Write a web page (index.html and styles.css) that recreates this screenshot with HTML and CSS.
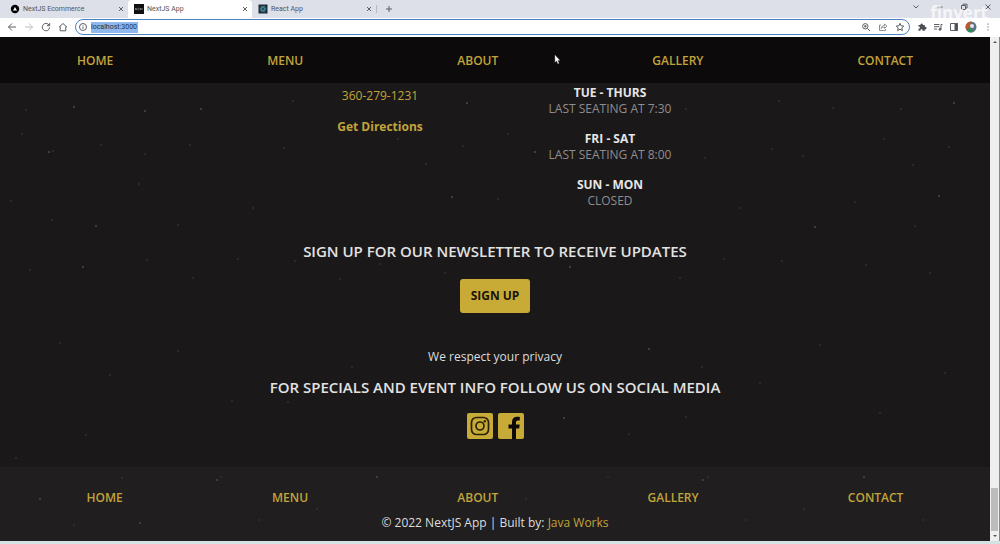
FILE: index.html
```
<!DOCTYPE html>
<html lang="en">
<head>
    <meta charset="UTF-8">
    <meta name="viewport" content="width=device-width, initial-scale=1.0">
    <title>NextJS App</title>
    <link rel="stylesheet" href="styles.css">
</head>
<body>
    <header class="browser">
        <div class="tabs">
            <div class="tab">
                <svg class="favicon" viewBox="0 0 10 10"><circle cx="5" cy="5" r="4.2" fill="#000"/><path d="M5 3l2 3.4H3z" fill="#fff"/></svg>
                <span class="tab-title">NextJS Ecommerce</span>
                <button class="tab-close" aria-label="Close tab"><svg viewBox="0 0 6 6"><path d="M1 1l4 4M5 1L1 5"/></svg></button>
            </div>
            <div class="tab active">
                <svg class="favicon" viewBox="0 0 10 10"><rect width="10" height="10" fill="#111"/><path d="M1.5 6V4l1.5 2V4M4 4.2h1.2M4 5.8h1.2M6 4l1 2M7 4L6 6M8 4v2" stroke="#bbb" stroke-width=".5" fill="none"/></svg>
                <span class="tab-title">NextJS App</span>
                <button class="tab-close" aria-label="Close tab"><svg viewBox="0 0 6 6"><path d="M1 1l4 4M5 1L1 5"/></svg></button>
            </div>
            <div class="tab">
                <svg class="favicon" viewBox="0 0 10 10"><rect x=".5" y=".5" width="9" height="9" fill="#1d2b36"/><g fill="none" stroke="#4f9bab" stroke-width=".6"><ellipse cx="5" cy="5" rx="3.2" ry="1.3"/><ellipse cx="5" cy="5" rx="3.2" ry="1.3" transform="rotate(60 5 5)"/><ellipse cx="5" cy="5" rx="3.2" ry="1.3" transform="rotate(120 5 5)"/></g></svg>
                <span class="tab-title">React App</span>
                <button class="tab-close" aria-label="Close tab"><svg viewBox="0 0 6 6"><path d="M1 1l4 4M5 1L1 5"/></svg></button>
            </div>
            <button class="new-tab" aria-label="New tab"><svg viewBox="0 0 8 8"><path d="M4 1v6M1 4h6"/></svg></button>
            <div class="window-controls">
                <button aria-label="Search tabs"><svg viewBox="0 0 8 8"><path d="M1.5 2.5L4 5l2.500-2.500"/></svg></button>
                <button aria-label="Minimize"><svg viewBox="0 0 8 8"><path d="M1.500 4h5"/></svg></button>
                <button aria-label="Restore"><svg viewBox="0 0 8 8"><path d="M1.500 2.500h4v4h-4zM3 2.500V1.200h4V5H5.500"/></svg></button>
                <button aria-label="Close"><svg viewBox="0 0 8 8"><path d="M1.500 1.500l5 5M6.500 1.500l-5 5"/></svg></button>
            </div>
            <span class="watermark">finvert</span>
        </div>
        <div class="toolbar">
            <button aria-label="Back"><svg viewBox="0 0 10 10"><path d="M9 5H1.500M5 1.500L1.500 5 5 8.500"/></svg></button>
            <button class="disabled" aria-label="Forward"><svg viewBox="0 0 10 10"><path d="M1 5h7.500M5 1.500L8.500 5 5 8.500"/></svg></button>
            <button aria-label="Reload"><svg viewBox="0 0 10 10"><path d="M8.200 3.200A3.700 3.700 0 1 0 8.700 5.500M8.700 1v2.700H6"/></svg></button>
            <button aria-label="Home"><svg viewBox="0 0 10 10"><path d="M1 5.200L5 1.500l4 3.700M2.200 4.500v4.300h5.600V4.500"/></svg></button>
            <div class="address">
                <svg class="icon" viewBox="0 0 10 10"><circle cx="5" cy="5" r="3.500"/><path d="M5 4.500v2.300M5 3v.7"/></svg>
                <label class="url"><input type="text" value="localhost:3000" aria-label="Address"></label>
                <button aria-label="Zoom"><svg viewBox="0 0 10 10"><circle cx="4.300" cy="4.300" r="2.700"/><path d="M6.300 6.300L9 9M3 4.300h2.600M4.300 3v2.600"/></svg></button>
                <button class="share" aria-label="Share"><svg viewBox="0 0 10 10"><path d="M3 3H1.500v5.500h6V7M3.200 6.500C3.500 4.300 5 3.500 6.500 3.500V2L9 4.200 6.500 6.400V5C5 5 4 5.500 3.200 6.500z"/></svg></button>
                <button aria-label="Bookmark"><svg viewBox="0 0 10 10"><path d="M5 1.300l1.100 2.500 2.700.3-2 1.800.6 2.700L5 7.200 2.600 8.600l.6-2.700-2-1.800 2.700-.3z"/></svg></button>
            </div>
            <div class="extensions">
                <button aria-label="Extensions"><svg viewBox="0 0 10 10"><path d="M1.500 3h2a1.200 1.200 0 1 1 2.300 0h2v2a1.200 1.200 0 1 1 0 2.200v1.600H5.600a1.100 1.100 0 1 0-2.100 0h-2V6.500a1 1 0 1 0 0-1.800z" fill="#4a4d52" stroke="none"/></svg></button>
                <button aria-label="Media"><svg viewBox="0 0 10 10"><path d="M1 2.500h5.500M1 4.700h5.500M1 7h3M9.500 2.500H8v4.700"/><circle cx="7" cy="7.300" r="1" fill="#4a4d52"/></svg></button>
                <button aria-label="Side panel"><svg viewBox="0 0 10 10"><path d="M1.500 1.500h7v7h-7z"/><path d="M6 1.500h2.500v7H6z" fill="#4a4d52"/></svg></button>
                <button class="avatar" aria-label="Profile"><svg viewBox="0 0 12 12"><circle cx="6" cy="6" r="5.500" fill="#5c7583" stroke="none"/><path d="M6 .5A5.500 5.500 0 0 0 1.500 9L5 6z" fill="#c2562f" stroke="none"/><path d="M1.500 9A5.500 5.500 0 0 0 8 11L6 6z" fill="#2f8a5b" stroke="none"/><circle cx="7" cy="5" r="2" fill="#dfe6ee" stroke="none"/></svg></button>
                <button aria-label="More"><svg viewBox="0 0 10 10"><path d="M5 1.500v1.200M5 4.400v1.200M5 7.300v1.200"/></svg></button>
            </div>
        </div>
    </header>

    <div class="viewport">
        <div class="page">
            <!-- speckled background -->
            <svg class="stars" aria-hidden="true">
                <g fill="#4c4a4b">
                    <circle cx="74" cy="24" r="1"/><circle cx="145" cy="28" r="1"/><circle cx="201" cy="26" r="1"/><circle cx="49" cy="69" r="1"/><circle cx="83" cy="184" r="1"/><circle cx="96" cy="143" r="1"/><circle cx="467" cy="20" r="1"/><circle cx="535" cy="69" r="1"/><circle cx="452" cy="114" r="1"/><circle cx="954" cy="20" r="1"/><circle cx="939" cy="113" r="1"/><circle cx="815" cy="144" r="1"/><circle cx="570" cy="184" r="1"/><circle cx="649" cy="266" r="1"/><circle cx="564" cy="335" r="1"/><circle cx="217" cy="397" r="1"/><circle cx="377" cy="394" r="1"/><circle cx="703" cy="397" r="1"/><circle cx="864" cy="394" r="1"/><circle cx="40" cy="416" r="1"/><circle cx="140" cy="440" r="1"/>
                </g>
                <g fill="#323031">
                    <circle cx="26" cy="27" r="1"/><circle cx="22" cy="51" r="1"/><circle cx="53" cy="68" r="1"/><circle cx="101" cy="62" r="1"/><circle cx="145" cy="71" r="1"/><circle cx="190" cy="62" r="1"/><circle cx="284" cy="65" r="1"/><circle cx="293" cy="18" r="1"/><circle cx="139" cy="101" r="1"/><circle cx="11" cy="118" r="1"/><circle cx="52" cy="137" r="1"/><circle cx="178" cy="142" r="1"/><circle cx="253" cy="125" r="1"/><circle cx="147" cy="177" r="1"/><circle cx="238" cy="176" r="1"/><circle cx="295" cy="178" r="1"/><circle cx="30" cy="187" r="1"/><circle cx="193" cy="195" r="1"/><circle cx="463" cy="63" r="1"/><circle cx="508" cy="51" r="1"/><circle cx="426" cy="81" r="1"/><circle cx="498" cy="116" r="1"/><circle cx="398" cy="56" r="1"/><circle cx="686" cy="26" r="1"/><circle cx="779" cy="18" r="1"/><circle cx="833" cy="25" r="1"/><circle cx="901" cy="26" r="1"/><circle cx="884" cy="56" r="1"/><circle cx="949" cy="64" r="1"/><circle cx="913" cy="82" r="1"/><circle cx="705" cy="75" r="1"/><circle cx="772" cy="66" r="1"/><circle cx="803" cy="73" r="1"/><circle cx="740" cy="125" r="1"/><circle cx="855" cy="119" r="1"/><circle cx="915" cy="143" r="1"/><circle cx="724" cy="176" r="1"/><circle cx="782" cy="178" r="1"/><circle cx="866" cy="182" r="1"/><circle cx="930" cy="190" r="1"/><circle cx="380" cy="181" r="1"/><circle cx="445" cy="190" r="1"/><circle cx="340" cy="196" r="1"/><circle cx="680" cy="195" r="1"/><circle cx="60" cy="260" r="1"/><circle cx="110" cy="292" r="1"/><circle cx="178" cy="268" r="1"/><circle cx="232" cy="318" r="1"/><circle cx="86" cy="352" r="1"/><circle cx="16" cy="375" r="1"/><circle cx="352" cy="284" r="1"/><circle cx="288" cy="319" r="1"/><circle cx="629" cy="351" r="1"/><circle cx="686" cy="334" r="1"/><circle cx="702" cy="284" r="1"/><circle cx="760" cy="300" r="1"/><circle cx="820" cy="262" r="1"/><circle cx="880" cy="330" r="1"/><circle cx="945" cy="290" r="1"/><circle cx="122" cy="395" r="1"/><circle cx="221" cy="394" r="1"/><circle cx="526" cy="416" r="1"/><circle cx="608" cy="394" r="1"/><circle cx="708" cy="394" r="1"/><circle cx="317" cy="426" r="1"/><circle cx="74" cy="442" r="1"/><circle cx="259" cy="437" r="1"/><circle cx="746" cy="437" r="1"/><circle cx="804" cy="426" r="1"/><circle cx="923" cy="437" r="1"/>
                </g>
            </svg>

            <nav class="nav top-nav">
                <a href="#">HOME</a>
                <a href="#">MENU</a>
                <a href="#">ABOUT</a>
                <a href="#">GALLERY</a>
                <a href="#">CONTACT</a>
            </nav>

            <main>
                <section class="info">
                    <div class="contact">
                        <a href="tel:3602791231">360-279-1231</a>
                        <a href="#" class="directions">Get Directions</a>
                    </div>
                    <div class="hours">
                        <p><strong>TUE - THURS</strong><br>LAST SEATING AT 7:30</p>
                        <p><strong>FRI - SAT</strong><br>LAST SEATING AT 8:00</p>
                        <p><strong>SUN - MON</strong><br>CLOSED</p>
                    </div>
                </section>

                <section class="newsletter">
                    <h2>SIGN UP FOR OUR NEWSLETTER TO RECEIVE UPDATES</h2>
                    <button class="signup">SIGN UP</button>
                    <p>We respect your privacy</p>
                </section>

                <section class="social">
                    <h2>FOR SPECIALS AND EVENT INFO FOLLOW US ON SOCIAL MEDIA</h2>
                    <div class="social-links">
                        <a href="#" aria-label="Instagram">
                            <svg viewBox="0 0 26 26"><rect width="26" height="26" rx="2" fill="#c8ab37"/><g fill="none" stroke="#2a2108" stroke-width="1.700"><rect x="4.500" y="4.500" width="17" height="17" rx="5"/><circle cx="13" cy="13" r="4"/></g><circle cx="17.800" cy="8.200" r="1.200" fill="#2a2108"/></svg>
                        </a>
                        <a href="#" aria-label="Facebook">
                            <svg viewBox="0 0 26 26"><rect width="26" height="26" rx="2" fill="#c8ab37"/><path d="M14 26V15.500h-3.500v-4H14V9c0-3.500 2-5.200 5.200-5.200 1.200 0 2 .1 2.600.2v3.500h-1.900c-1.500 0-1.900.8-1.900 1.900v2.100h3.700l-.5 4H18V26z" fill="#0d0b08"/></svg>
                        </a>
                    </div>
                </section>
            </main>

            <footer>
                <nav class="nav">
                    <a href="#">HOME</a>
                    <a href="#">MENU</a>
                    <a href="#">ABOUT</a>
                    <a href="#">GALLERY</a>
                    <a href="#">CONTACT</a>
                </nav>
                <p>© 2022 NextJS App | Built by: <a href="#">Java Works</a></p>
            </footer>

            <svg class="cursor" viewBox="0 0 8 12" aria-hidden="true"><path d="M1 .5v9l2-1.800 1.400 3.300 1.500-.7-1.400-3.100H7z" fill="#fff" stroke="#333" stroke-width=".4"/></svg>
        </div>
        <div class="scrollbar">
            <svg viewBox="0 0 8 8"><path d="M2 5l2-2 2 2z"/></svg>
            <div class="thumb"></div>
            <svg viewBox="0 0 8 8"><path d="M2 3l2 2 2-2z"/></svg>
        </div>
    </div>
    <div class="taskbar"></div>
</body>
</html>
```
FILE: styles.css
```
* {
    box-sizing: border-box;
}
body {
    margin: 0;
    height: 100vh;
    display: flex;
    flex-direction: column;
    font-family: "Open Sans", "Noto Sans", sans-serif;
    font-size: 12px;
    line-height: 16px;
    color: #ddd;
    background: #1a1819;
}
h2, p {
    margin: 0;
}
a {
    color: #c2a43a;
    text-decoration: none;
}
button {
    border: none;
    padding: 0;
    background: none;
    font-family: inherit;
}
svg {
    display: block;
}

/* browser window */
.browser {
    background: #fff;
    font-family: Roboto, sans-serif;
    font-size: 7px;
    color: #555;
}
.browser svg {
    width: 10px;
    height: 10px;
}
.browser button svg, .browser .icon {
    fill: none;
    stroke: #5c5f64;
    stroke-width: 1;
}
.tabs {
    position: relative;
    display: flex;
    align-items: center;
    height: 18px;
    background: #dddfe9;
}
.tab {
    display: flex;
    align-items: center;
    gap: 3px;
    width: 124px;
    height: 18px;
    padding: 0 4px 0 6px;
}
.tab:first-child {
    width: 128px;
    padding-left: 10px;
}
.tab.active {
    background: #fff;
    border-radius: 4px 4px 0 0;
}
.tab-title {
    flex: 1;
}
.browser .tab-close svg {
    width: 6px;
    height: 6px;
}
.new-tab {
    border-left: 1px solid #b8bac4;
    padding-left: 8px;
}
.browser .new-tab svg, .browser .window-controls svg {
    width: 8px;
    height: 8px;
}
.window-controls {
    display: flex;
    gap: 16px;
    margin-left: auto;
    padding: 0 8px 4px 0;
}
.watermark {
    position: absolute;
    top: 4px;
    right: 12px;
    font-family: "Open Sans", sans-serif;
    font-size: 17px;
    line-height: 18px;
    font-weight: bold;
    color: #fff;
    opacity: 0.7;
}
.toolbar {
    display: flex;
    align-items: center;
    gap: 7px;
    height: 19px;
    padding: 0 7px 1px;
}
.disabled {
    opacity: 0.4;
}
.address {
    flex: 1;
    display: flex;
    align-items: center;
    gap: 7px;
    height: 16px;
    padding: 0 4px 0 2px;
    border: 1px solid #4a83c4;
    border-radius: 8px;
}
.address .icon {
    margin-right: -4px;
}
.url {
    flex: 1;
    display: flex;
}
.url input {
    width: 47px;
    height: 11px;
    padding: 0;
    border: none;
    font-family: inherit;
    font-size: 7px;
    color: #234;
    background: #8fb9ee;
}
.share {
    opacity: 0.7;
}
.extensions {
    display: flex;
    align-items: center;
    gap: 6px;
}
.browser .avatar svg {
    width: 12px;
    height: 12px;
}

/* page */
.viewport {
    flex: 1;
    display: flex;
}
.page {
    position: relative;
    flex: 1;
    display: flex;
    flex-direction: column;
    text-align: center;
}
.stars {
    position: absolute;
    top: 46px;
    left: 0;
    width: 100%;
    height: calc(100% - 46px);
    z-index: 1;
    pointer-events: none;
}
.nav {
    display: flex;
    justify-content: space-around;
    font-size: 12px;
    font-weight: 600;
}
.top-nav {
    padding: 16px 0 14px;
    background: #0c0a0b;
}
main {
    flex: 1;
}
.info {
    display: grid;
    grid-template-columns: 230px 230px;
    justify-content: center;
}
.contact {
    display: flex;
    flex-direction: column;
    gap: 15px;
    padding-top: 5px;
}
.directions {
    font-weight: bold;
}
.hours {
    display: flex;
    flex-direction: column;
    gap: 14px;
    padding-top: 2px;
    color: #8f8d8e;
}
.hours strong {
    color: #e6e6e6;
}
h2 {
    font-size: 15px;
    line-height: 20px;
    font-weight: 600;
    color: #e2e2e2;
}
.newsletter {
    padding-top: 32px;
}
.signup {
    margin: 18px 0 36px;
    padding: 9px 11px;
    border-radius: 3px;
    background: #c8ab37;
    color: #1a1408;
    font-size: 12px;
    line-height: 16px;
    font-weight: bold;
}
.social {
    padding-top: 12px;
}
.social-links {
    display: flex;
    justify-content: center;
    gap: 5px;
    padding-top: 16px;
}
.social-links svg {
    width: 26px;
    height: 26px;
}
footer {
    padding: 23px 12px 10px;
    background: #201e1f;
}
footer p {
    padding-top: 9px;
}
.cursor {
    position: absolute;
    top: 17px;
    left: 554px;
    width: 7px;
    height: 11px;
}

/* scrollbar */
.scrollbar {
    display: flex;
    flex-direction: column;
    align-items: center;
    width: 10px;
    background: #f0eff0;
    border-right: 1px solid #888;
}
.scrollbar svg {
    width: 8px;
    height: 10px;
    fill: #555;
}
.thumb {
    width: 7px;
    height: 43px;
    margin-top: auto;
    background: #bdbbbc;
}
.taskbar {
    height: 3px;
    background: #d3e2e2;
}
```
